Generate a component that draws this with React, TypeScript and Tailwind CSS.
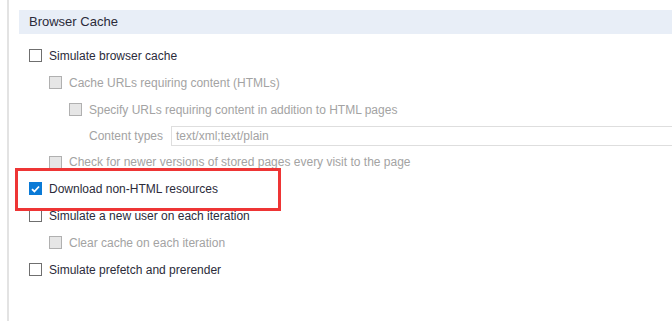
import React from 'react';

type Row = {
  label: string;
  level: 0 | 1 | 2;
  disabled?: boolean;
  checked?: boolean;
};

const ROWS: Row[] = [
  { label: 'Simulate browser cache', level: 0 },
  { label: 'Cache URLs requiring content (HTMLs)', level: 1, disabled: true },
  { label: 'Specify URLs requiring content in addition to HTML pages', level: 2, disabled: true },
];

const ROWS2: Row[] = [
  { label: 'Check for newer versions of stored pages every visit to the page', level: 1, disabled: true },
  { label: 'Download non-HTML resources', level: 0, checked: true },
  { label: 'Simulate a new user on each iteration', level: 0 },
  { label: 'Clear cache on each iteration', level: 1, disabled: true },
  { label: 'Simulate prefetch and prerender', level: 0 },
];

const INDENT = ['pl-[10px]', 'pl-[30px]', 'pl-[50px]'];

function Box({ checked, disabled }: { checked?: boolean; disabled?: boolean }) {
  if (checked) {
    return (
      <span className="w-[13px] h-[13px] shrink-0 bg-[#0a7ad6] flex items-center justify-center">
        <svg width="9" height="8" viewBox="0 0 9 8">
          <path d="M1 4.2 L3.4 6.5 L8 1.5" stroke="#fff" strokeWidth="1.8" fill="none" />
        </svg>
      </span>
    );
  }
  return (
    <span
      className={
        disabled
          ? 'w-[13px] h-[13px] shrink-0 border border-[#b0b0b0] bg-[#e6e6e6]'
          : 'w-[13px] h-[13px] shrink-0 border border-[#6f6f6f] bg-white'
      }
    />
  );
}

function Item({ row, tall = true }: { row: Row; tall?: boolean }) {
  return (
    <div className={`flex items-center gap-[7px] ${tall ? 'h-[27px]' : 'h-[26px]'} ${INDENT[row.level]}`}>
      <Box checked={row.checked} disabled={row.disabled} />
      <span className={row.disabled ? 'text-[#a3a3a3]' : 'text-[#2b2b3a]'}>{row.label}</span>
    </div>
  );
}

export default function App() {
  return (
    <div className="w-[672px] h-[321px] bg-white flex overflow-hidden font-['Liberation_Sans',Arial,sans-serif] text-[12px]">
      <div className="ml-[7px] w-[2px] bg-[#e3e3e3] shrink-0" />
      <div className="flex-1 pt-[10px] pl-[10px] relative">
        <div className="h-[24px] bg-[#e8eef7] pl-[10px] flex items-center text-[13px] text-[#2b2b3a]">
          Browser Cache
        </div>
        <div className="mt-[8px]">
          {ROWS.map((r) => (
            <Item key={r.label} row={r} />
          ))}
          <div className="h-[26px] flex items-center pl-[70px]">
            <span className="text-[#a3a3a3] w-[82px] shrink-0">Content types</span>
            <div className="flex-1 h-[20px] border border-r-0 border-[#dedede] flex items-center pl-[4px] text-[#a3a3a3]">
              text/xml;text/plain
            </div>
          </div>
          <Item row={ROWS2[0]} tall={false} />
          {ROWS2.slice(1).map((r) => (
            <Item key={r.label} row={r} />
          ))}
        </div>
        {/* annotation frame */}
        <div className="absolute left-[6px] top-[168px] w-[266px] h-[43px] border-[3px] border-[#ee3535]" />
      </div>
    </div>
  );
}
